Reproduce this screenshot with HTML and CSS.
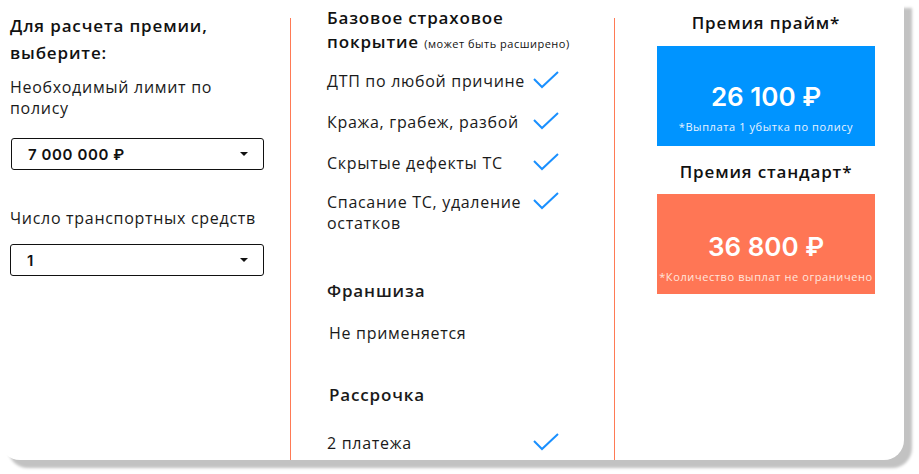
FILE: index.html
```html
<!DOCTYPE html>
<html lang="ru">
<head>
<meta charset="utf-8">
<link rel="stylesheet" href="styles.css">
</head>
<body>
<div class="card">
  <div class="col col-form">
    <h2 class="title">Для расчета премии, выберите:</h2>
    <p class="label label-limit">Необходимый лимит по полису</p>
    <div class="select"><span class="select-value">7 000 000 ₽</span><span class="caret"></span></div>
    <p class="label label-count">Число транспортных средств</p>
    <div class="select"><span class="select-value">1</span><span class="caret"></span></div>
  </div>
  <div class="divider"></div>
  <div class="col col-cover">
    <h2 class="title title-cover">Базовое страховое<br>покрытие <small>(может быть расширено)</small></h2>
    <ul class="list">
      <li class="item"><span class="item-text">ДТП по любой причине</span><svg class="check" viewBox="0 0 26 18"><polyline points="1,8 9,16 25,1"/></svg></li>
      <li class="item"><span class="item-text">Кража, грабеж, разбой</span><svg class="check" viewBox="0 0 26 18"><polyline points="1,8 9,16 25,1"/></svg></li>
      <li class="item"><span class="item-text">Скрытые дефекты ТС</span><svg class="check" viewBox="0 0 26 18"><polyline points="1,8 9,16 25,1"/></svg></li>
      <li class="item"><span class="item-text">Спасание ТС, удаление остатков</span><svg class="check" viewBox="0 0 26 18"><polyline points="1,8 9,16 25,1"/></svg></li>
    </ul>
    <h3 class="subhead subhead-fr">Франшиза</h3>
    <p class="plain">Не применяется</p>
    <h3 class="subhead subhead-rs">Рассрочка</h3>
    <div class="item item-last"><span class="item-text">2 платежа</span><svg class="check" viewBox="0 0 26 18"><polyline points="1,8 9,16 25,1"/></svg></div>
  </div>
  <div class="divider"></div>
  <div class="col col-price">
    <h2 class="title price-title">Премия прайм*</h2>
    <div class="price price-blue">
      <div class="price-sum">26 100 ₽</div>
      <div class="price-note">*Выплата 1 убытка по полису</div>
    </div>
    <h2 class="title price-title price-title-2">Премия стандарт*</h2>
    <div class="price price-orange">
      <div class="price-sum">36 800 ₽</div>
      <div class="price-note">*Количество выплат не ограничено</div>
    </div>
  </div>
</div>
</body>
</html>
```

FILE: styles.css
```css
* { box-sizing: border-box; }
html, body { margin: 0; padding: 0; background: #fff; }
body {
  width: 919px;
  height: 474px;
  overflow: hidden;
  font-family: "Open Sans", "Noto Sans", sans-serif;
  color: #1a1a1a;
}
.card {
  width: 904px;
  height: 460px;
  background: #fff;
  border-radius: 0 0 20px 20px;
  box-shadow: 8px 8px 3px #c2c2c2;
  display: flex;
}
.divider {
  width: 1px;
  margin-top: 18px;
  background: #ff7a55;
  flex: none;
}
.col { flex: none; }
.col-form { width: 290px; padding: 12px 0 0 10px; }
.col-cover { width: 323px; padding: 6px 0 0 36px; }
.col-price { width: 289px; padding: 10px 0 0 42px; }

.title {
  margin: 0;
  font-size: 17px;
  font-weight: 600;
  line-height: 27px;
  letter-spacing: 0.85px;
  color: #111;
}
.label {
  margin: 0;
  font-size: 16px;
  line-height: 21px;
  letter-spacing: 0.7px;
}
.label-limit { margin-top: 11px; width: 240px; }
.label-count { margin-top: 38px; }
.select {
  width: 254px;
  height: 32px;
  border: 1px solid #111;
  border-radius: 3px;
  display: flex;
  align-items: center;
  justify-content: space-between;
  padding: 0 15px 0 16px;
}
.col-form .label-limit + .select { margin-top: 19px; margin-left: 1px; width: 253px; }
.label-count + .select { margin-top: 15px; }
.select-value {
  font-family: "Inter", sans-serif;
  font-weight: 600;
  font-size: 15px;
  letter-spacing: 0.6px;
  color: #111;
}
.caret {
  width: 0; height: 0;
  border-left: 4px solid transparent;
  border-right: 4px solid transparent;
  border-top: 4px solid #111;
}

.title-cover { line-height: 24px; }
.title-cover small { font-size: 11px; font-weight: 400; letter-spacing: 0.5px; }
.list { list-style: none; margin: 15px 0 0; padding: 0; }
.item {
  display: flex;
  align-items: flex-start;
  font-size: 16px;
  line-height: 21px;
  letter-spacing: 0.7px;
  min-height: 21px;
}
.list .item + .item { margin-top: 20px; }
.list .item:last-child { margin-top: 18px; }
.item-text { width: 206px; }
.check {
  width: 26px;
  height: 18px;
  margin-top: 0;
  fill: none;
  stroke: #1a90ff;
  stroke-width: 2;
}
.subhead {
  margin: 0;
  font-size: 17px;
  font-weight: 600;
  line-height: 24px;
  letter-spacing: 0.85px;
}
.subhead-fr { margin-top: 45px; }
.plain { margin: 20px 0 0 2px; font-size: 16px; line-height: 21px; letter-spacing: 0.7px; }
.subhead-rs { margin: 39px 0 0 2px; }
.item-last { margin-top: 26px; }

.price-title { text-align: center; width: 218px; line-height: 26px; }
.price-title-2 { margin-top: 13px; }
.price {
  width: 218px;
  height: 100px;
  margin-top: 10px;
  color: #fff;
  text-align: center;
  padding-top: 36px;
}
.price-title-2 + .price { margin-top: 9px; }
.price-blue { background: #0094ff; }
.price-orange { background: #ff7655; padding-top: 38px; }
.price-sum {
  font-family: "Inter", sans-serif;
  font-weight: 600;
  font-size: 26px;
  line-height: 30px;
}
.price-note {
  font-size: 11px;
  line-height: 14px;
  margin-top: 8px;
  color: #e8f3ff;
  letter-spacing: 0.6px;
  white-space: nowrap;
}
.price-orange .price-note { color: #ffe6de; }
```
